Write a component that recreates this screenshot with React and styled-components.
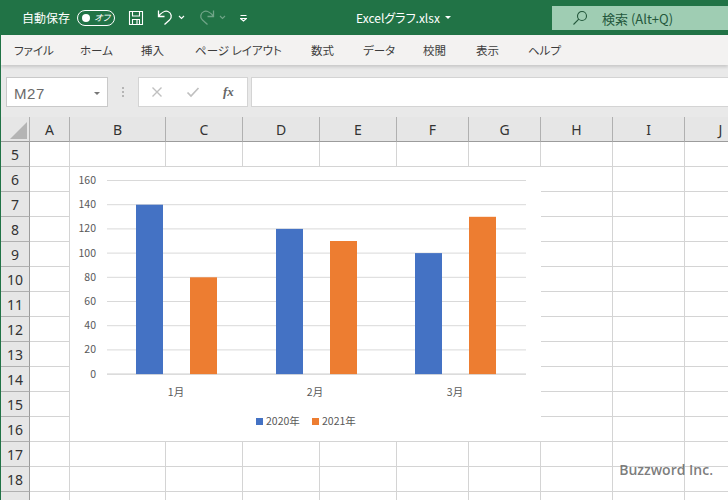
import styled, { createGlobalStyle } from 'styled-components';

const GlobalStyle = createGlobalStyle`
  html, body {
    margin: 0;
    padding: 0;
    background: #fff;
  }
  body {
    font-family: "Noto Sans CJK JP", "Noto Sans", sans-serif;
  }
`;

const Page = styled.div`
  width: 728px;
  height: 500px;
  overflow: hidden;
  display: flex;
  flex-direction: column;
  background: #e9e9e9;
  border-left: 1px solid #217346;
  box-sizing: border-box;
`;

const TitleBar = styled.header`
  height: 35px;
  margin-left: -1px;
  flex: none;
  display: flex;
  align-items: flex-start;
  background: #217346;
  color: #fff;
`;

const QuickAccess = styled.div`
  width: 356px;
  height: 35px;
  flex: none;
  display: flex;
  align-items: center;
  padding-left: 22px;
  box-sizing: border-box;
`;

const AutoSave = styled.span`
  font-size: 12px;
  font-feature-settings: "palt";
  width: 55px;
  white-space: nowrap;
`;

const Toggle = styled.span`
  width: 38px;
  height: 16px;
  border: 1px solid #fff;
  border-radius: 9px;
  box-sizing: border-box;
  display: flex;
  align-items: center;
  justify-content: space-between;
  padding: 0 4px;
  font-size: 9px;
  font-style: italic;
  font-feature-settings: "palt";
  margin-right: 13px;
`;

const Knob = styled.i`
  width: 8px;
  height: 8px;
  border-radius: 50%;
  background: #fff;
`;

const QuickIcon = styled.svg`
  flex: none;
  margin-right: ${(p) => p.$gap || 0}px;
  fill: none;
  stroke: #fff;
  stroke-width: ${(p) => p.$stroke || 1.1};
  opacity: ${(p) => (p.$dim ? 0.35 : 1)};
`;

const FileName = styled.div`
  width: 196px;
  height: 35px;
  flex: none;
  display: flex;
  align-items: center;
  gap: 5px;
  font-size: 12px;
  font-feature-settings: "palt";
  white-space: nowrap;
`;

const Caret = styled.i`
  width: 0;
  height: 0;
  border-left: 3px solid transparent;
  border-right: 3px solid transparent;
  border-top: 3px solid ${(p) => p.$color || '#fff'};
`;

const SearchBox = styled.div`
  flex: 1;
  height: 24px;
  margin-top: 6px;
  background: #9fcdb3;
  display: flex;
  align-items: center;
  padding-left: 20px;
  gap: 14px;
  color: #24583c;
  font-size: 13px;
  font-feature-settings: "palt";
`;

const MenuBar = styled.nav`
  height: 30px;
  flex: none;
  display: flex;
  align-items: center;
  background: #f3f2f1;
  padding-left: 13px;
  box-shadow: 0 2px 3px rgba(0, 0, 0, 0.14);
  position: relative;
`;

const MenuItem = styled.span`
  width: ${(p) => p.$width}px;
  flex: none;
  font-size: 11.5px;
  font-feature-settings: "palt";
  color: #3c3c3c;
  white-space: nowrap;
`;

const FormulaBar = styled.div`
  height: 52px;
  flex: none;
  display: flex;
  align-items: flex-start;
  padding-top: 12px;
  box-sizing: border-box;
  background: #e9e9e9;
`;

const NameBox = styled.div`
  width: 102px;
  height: 30px;
  margin-left: 5px;
  flex: none;
  box-sizing: border-box;
  background: #fff;
  border: 1px solid #c9c9c9;
  display: flex;
  align-items: center;
  justify-content: space-between;
  padding: 2px 7px 0 7px;
  font: 15px "Liberation Sans", sans-serif;
  letter-spacing: 0.6px;
  color: #6a6a6a;
`;

const Grip = styled.span`
  width: 30px;
  flex: none;
  height: 30px;
  display: flex;
  flex-direction: column;
  align-items: center;
  justify-content: center;
  gap: 2px;
  & i {
    width: 2px;
    height: 2px;
    background: #b5b5b5;
  }
`;

const FormulaButtons = styled.div`
  width: 110px;
  height: 30px;
  flex: none;
  box-sizing: border-box;
  background: #fff;
  border: 1px solid #d4d4d4;
  display: flex;
  align-items: center;
  padding-left: 12px;
  gap: 23px;
`;

const FxLabel = styled.span`
  font: italic bold 13px "Liberation Serif", serif;
  color: #666;
`;

const FormulaInput = styled.div`
  flex: 1;
  height: 30px;
  margin-left: 3px;
  box-sizing: border-box;
  background: #fff;
  border: 1px solid #d4d4d4;
  border-right: 0;
`;

const Sheet = styled.div`
  position: relative;
  flex: 1;
  min-height: 0;
  overflow: hidden;
  display: grid;
  grid-template-columns: 29px 40px 96px 77px 77px 77px 72px 72px 72px 72px 72px;
  grid-template-rows: 25px;
  grid-auto-rows: 25px;
  background: #fff;
`;

const Corner = styled.div`
  background: #e6e6e6;
  border-right: 1px solid #b0b0b0;
  border-bottom: 1px solid #9c9c9c;
  box-sizing: border-box;
  display: flex;
  align-items: flex-end;
  justify-content: flex-end;
  padding: 0 2px 2px 0;
  &::after {
    content: '';
    width: 17px;
    height: 17px;
    background: #b4b4b4;
    clip-path: polygon(100% 0, 100% 100%, 0 100%);
  }
`;

const ColumnHead = styled.div`
  background: #e6e6e6;
  border-right: 1px solid #b0b0b0;
  border-bottom: 1px solid #9c9c9c;
  box-sizing: border-box;
  display: flex;
  align-items: center;
  justify-content: center;
  font: 14px "Noto Sans", sans-serif;
  color: #333;
`;

const RowHead = styled.div`
  background: #e6e6e6;
  border-right: 1px solid #9c9c9c;
  border-bottom: 1px solid #b0b0b0;
  box-sizing: border-box;
  display: flex;
  align-items: center;
  justify-content: center;
  font: 14px "Noto Sans", sans-serif;
  color: #333;
`;

const Cell = styled.div`
  border-right: 1px solid #d4d4d4;
  border-bottom: 1px solid #d4d4d4;
  box-sizing: border-box;
`;

const ChartFrame = styled.svg`
  position: absolute;
  left: 69px;
  top: 50px;
  background: #fff;
  font-family: "Noto Sans CJK JP", "Noto Sans", sans-serif;
`;

const Watermark = styled.span`
  position: absolute;
  right: 15px;
  bottom: 21px;
  font: 600 14px "Open Sans", sans-serif;
  color: rgba(90, 90, 90, 0.8);
`;

const columns = ['A', 'B', 'C', 'D', 'E', 'F', 'G', 'H', 'I', 'J'];
const rows = [5, 6, 7, 8, 9, 10, 11, 12, 13, 14, 15, 16, 17, 18, 19];
const menu = [
  ['ファイル', 66],
  ['ホーム', 61],
  ['挿入', 54],
  ['ページ レイアウト', 116],
  ['数式', 52],
  ['データ', 60],
  ['校閲', 53],
  ['表示', 52],
  ['ヘルプ', 40],
];

const axisTop = 13.5;
const axisStep = 24.2;
const yTicks = [160, 140, 120, 100, 80, 60, 40, 20, 0];
const groups = [
  { label: '1月', a: 140, b: 80, ax: 66, bx: 120, cx: 106 },
  { label: '2月', a: 120, b: 110, ax: 206, bx: 260, cx: 245 },
  { label: '3月', a: 100, b: 130, ax: 345, bx: 399, cx: 385 },
];
const valueY = (v) => axisTop + ((160 - v) / 20) * axisStep;

const Chart = () => (
  <ChartFrame width="471" height="274" viewBox="0 0 471 274">
    {yTicks.map((t) => (
      <g key={t}>
        <line x1="37" x2="456" y1={valueY(t)} y2={valueY(t)} stroke={t === 0 ? '#c4c4c4' : '#d9d9d9'} />
        <text x="26" y={valueY(t) + 3.5} textAnchor="end" fontSize="10.5" fill="#595959">{t}</text>
      </g>
    ))}
    {groups.map((g) => (
      <g key={g.label}>
        <rect x={g.ax} y={valueY(g.a)} width="27" height={valueY(0) - valueY(g.a)} fill="#4472c4" />
        <rect x={g.bx} y={valueY(g.b)} width="27" height={valueY(0) - valueY(g.b)} fill="#ed7d31" />
        <text x={g.cx} y="229" textAnchor="middle" fontSize="10.5" fill="#595959">{g.label}</text>
      </g>
    ))}
    <rect x="186" y="251" width="7" height="7" fill="#4472c4" />
    <text x="196" y="258" fontSize="10.5" fill="#595959">2020年</text>
    <rect x="242" y="251" width="7" height="7" fill="#ed7d31" />
    <text x="252" y="258" fontSize="10.5" fill="#595959">2021年</text>
  </ChartFrame>
);

const App = () => (
  <Page>
    <GlobalStyle />
    <TitleBar>
      <QuickAccess>
        <AutoSave>自動保存</AutoSave>
        <Toggle><Knob />オフ</Toggle>
        <QuickIcon width="16" height="16" viewBox="0 0 16 16" $gap="13">
          <path d="M1.5 1.5h13v13h-13zM4.5 1.5v4.5h7v-4.5M4.5 14.5v-5h7v5M9 10v4.5" />
        </QuickIcon>
        <QuickIcon width="17" height="17" viewBox="0 0 17 17" $gap="4" $stroke="1.3">
          <path d="M1.5 1.5v6h6M1.5 7.5C4 4 8 1.5 11 2.5a5 5 0 0 1 1.5 8.5L7.5 15.5" />
        </QuickIcon>
        <QuickIcon width="7" height="5" viewBox="0 0 7 5" $gap="13">
          <path d="M1 1l2.5 2.5L6 1" />
        </QuickIcon>
        <QuickIcon width="17" height="17" viewBox="0 0 17 17" $gap="4" $stroke="1.3" $dim>
          <path d="M15.5 1.5v6h-6M15.5 7.5C13 4 9 1.5 6 2.5a5 5 0 0 0-1.5 8.5l5 4.5" />
        </QuickIcon>
        <QuickIcon width="7" height="5" viewBox="0 0 7 5" $gap="14" $dim>
          <path d="M1 1l2.5 2.5L6 1" />
        </QuickIcon>
        <QuickIcon width="7" height="8" viewBox="0 0 7 8">
          <path d="M0.5 1.5h6M0.5 4.5l3 2.5 3-2.5z" />
        </QuickIcon>
      </QuickAccess>
      <FileName>Excelグラフ.xlsx<Caret /></FileName>
      <SearchBox>
        <svg width="16" height="16" viewBox="0 0 16 16" fill="none" stroke="#24583c" strokeWidth="1.1">
          <circle cx="10" cy="6" r="4.5" />
          <path d="M6.8 9.2L1.5 14.5" />
        </svg>
        検索 (Alt+Q)
      </SearchBox>
    </TitleBar>
    <MenuBar>
      {menu.map(([label, width]) => (
        <MenuItem key={label} $width={width}>{label}</MenuItem>
      ))}
    </MenuBar>
    <FormulaBar>
      <NameBox>M27<Caret $color="#777" /></NameBox>
      <Grip><i /><i /><i /></Grip>
      <FormulaButtons>
        <svg width="12" height="12" viewBox="0 0 12 12" stroke="#c0c0c0" strokeWidth="1.4">
          <path d="M1.5 1.5l9 9M10.5 1.5l-9 9" />
        </svg>
        <svg width="14" height="12" viewBox="0 0 14 12" fill="none" stroke="#c0c0c0" strokeWidth="1.7">
          <path d="M1.5 6.5l3.5 3.5 7.5-8" />
        </svg>
        <FxLabel>fx</FxLabel>
      </FormulaButtons>
      <FormulaInput />
    </FormulaBar>
    <Sheet>
      <Corner />
      {columns.map((c) => <ColumnHead key={c}>{c}</ColumnHead>)}
      {rows.map((r) => [
        <RowHead key={r}>{r}</RowHead>,
        ...columns.map((c) => <Cell key={`${c}${r}`} />),
      ])}
      <Chart />
      <Watermark>Buzzword Inc.</Watermark>
    </Sheet>
  </Page>
);

export default App;
